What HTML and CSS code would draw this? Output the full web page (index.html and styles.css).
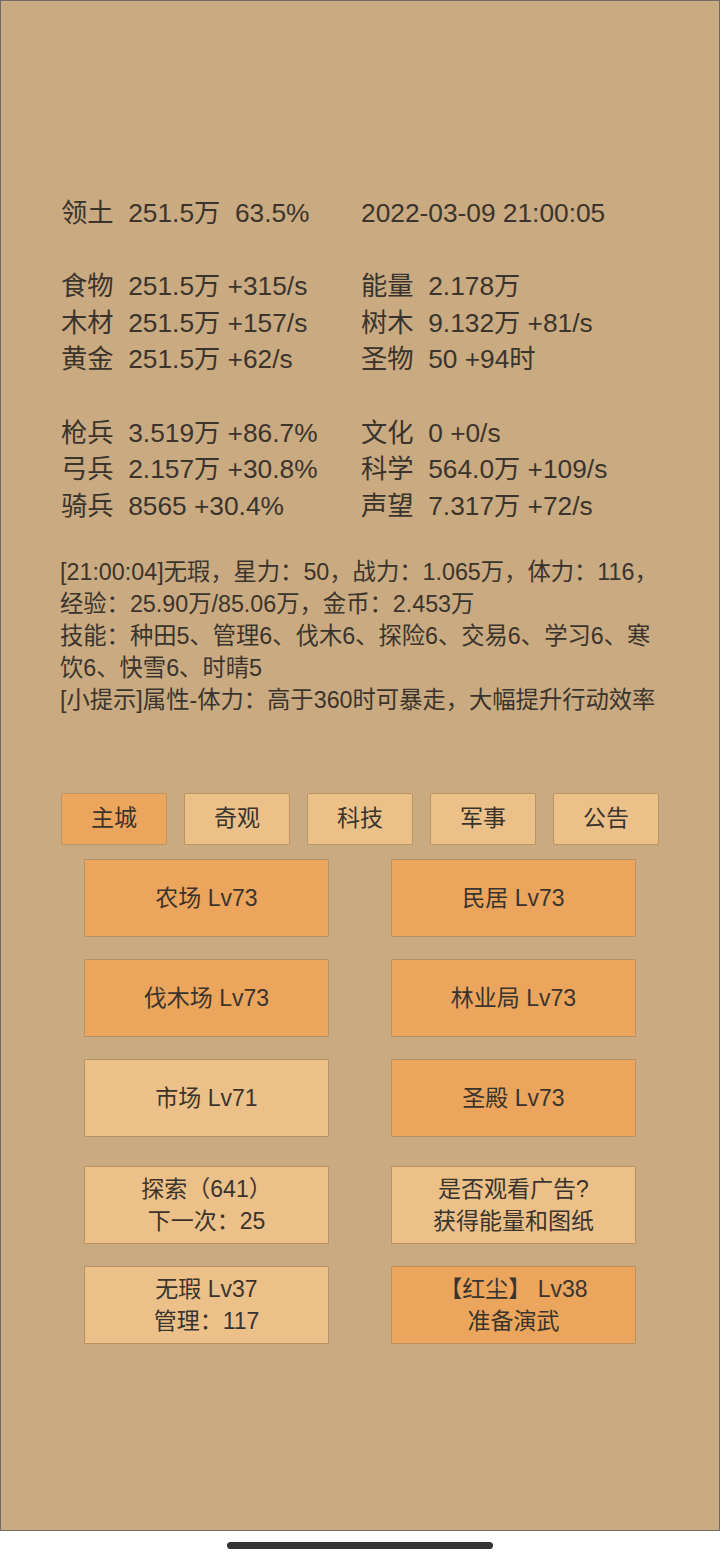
FILE: index.html
```html
<!DOCTYPE html>
<html lang="zh-CN">
<head>
<meta charset="utf-8">
<title>主城</title>
<link rel="stylesheet" href="styles.css">
</head>
<body>
<div class="frame">
  <div class="content">
    <div class="stats">
      <div class="group">
        <div class="cell">领土  251.5万  63.5%</div>
        <div class="cell">2022-03-09 21:00:05</div>
      </div>
      <div class="group">
        <div class="cell">食物  251.5万 +315/s</div>
        <div class="cell">能量  2.178万</div>
        <div class="cell">木材  251.5万 +157/s</div>
        <div class="cell">树木  9.132万 +81/s</div>
        <div class="cell">黄金  251.5万 +62/s</div>
        <div class="cell">圣物  50 +94时</div>
      </div>
      <div class="group">
        <div class="cell">枪兵  3.519万 +86.7%</div>
        <div class="cell">文化  0 +0/s</div>
        <div class="cell">弓兵  2.157万 +30.8%</div>
        <div class="cell">科学  564.0万 +109/s</div>
        <div class="cell">骑兵  8565 +30.4%</div>
        <div class="cell">声望  7.317万 +72/s</div>
      </div>
    </div>
    <div class="log">
      <p>[21:00:04]无瑕，星力：50，战力：1.065万，体力：116，经验：25.90万/85.06万，金币：2.453万</p>
      <p>技能：种田5、管理6、伐木6、探险6、交易6、学习6、寒饮6、快雪6、时晴5</p>
      <p>[小提示]属性-体力：高于360时可暴走，大幅提升行动效率</p>
    </div>
    <div class="tabs">
      <div class="tab active">主城</div>
      <div class="tab">奇观</div>
      <div class="tab">科技</div>
      <div class="tab">军事</div>
      <div class="tab">公告</div>
    </div>
    <div class="buildings">
      <div class="btn hot">农场 Lv73</div>
      <div class="btn hot">民居 Lv73</div>
      <div class="btn hot">伐木场 Lv73</div>
      <div class="btn hot">林业局 Lv73</div>
      <div class="btn">市场 Lv71</div>
      <div class="btn hot">圣殿 Lv73</div>
    </div>
    <div class="actions">
      <div class="btn two"><span>探索（641）</span><span>下一次：25</span></div>
      <div class="btn two"><span>是否观看广告?</span><span>获得能量和图纸</span></div>
      <div class="btn two"><span>无瑕 Lv37</span><span>管理：117</span></div>
      <div class="btn two hot"><span>【红尘】 Lv38</span><span>准备演武</span></div>
    </div>
  </div>
</div>
<div class="home-area"><div class="home-bar"></div></div>
</body>
</html>
```

FILE: styles.css
```css
html, body {
  margin: 0;
  padding: 0;
  background: #ffffff;
}
body {
  width: 720px;
  height: 1560px;
  font-family: "Liberation Sans", "Noto Sans CJK SC", sans-serif;
  color: #3a342d;
}
.frame {
  box-sizing: border-box;
  width: 720px;
  height: 1531px;
  background: #c9aa81;
  border: 1px solid #6f6c68;
}
.content {
  padding: 194px 60px 0 60px;
}
.stats {
  font-size: 26.3px;
  line-height: 36.6px;
}
.group {
  display: grid;
  grid-template-columns: 300px 300px;
}
.group + .group {
  margin-top: 36.6px;
}
.cell {
  white-space: pre;
}
.log {
  margin-top: 32px;
  margin-left: -1px;
  margin-right: -6px;
  font-size: 23.3px;
  line-height: 32px;
}
.log p {
  margin: 0;
}
.tabs {
  margin-top: 77px;
  display: flex;
  justify-content: space-between;
}
.tab {
  box-sizing: border-box;
  width: 106px;
  height: 52px;
  display: flex;
  align-items: center;
  justify-content: center;
  font-size: 23px;
  line-height: 28px;
  padding-bottom: 3px;
  background: #ecc089;
  border: 1px solid #bc9462;
  border-radius: 2px;
}
.tab.active {
  background: #eba55d;
}
.buildings, .actions {
  display: grid;
  grid-template-columns: 245px 245px;
  column-gap: 62px;
  padding: 0 24px 0 23px;
}
.buildings {
  margin-top: 14px;
  row-gap: 22px;
}
.actions {
  margin-top: 29px;
  row-gap: 22px;
}
.btn {
  box-sizing: border-box;
  height: 78px;
  display: flex;
  flex-direction: column;
  align-items: center;
  justify-content: center;
  font-size: 23px;
  line-height: 32px;
  background: #ecc089;
  border: 1px solid #b9905f;
  border-radius: 1px;
  white-space: pre;
}
.btn.hot {
  background: #eba55d;
}
.home-area {
  height: 29px;
  display: flex;
  justify-content: center;
  align-items: center;
}
.home-bar {
  width: 266px;
  height: 7px;
  border-radius: 4px;
  background: #333333;
}
```
